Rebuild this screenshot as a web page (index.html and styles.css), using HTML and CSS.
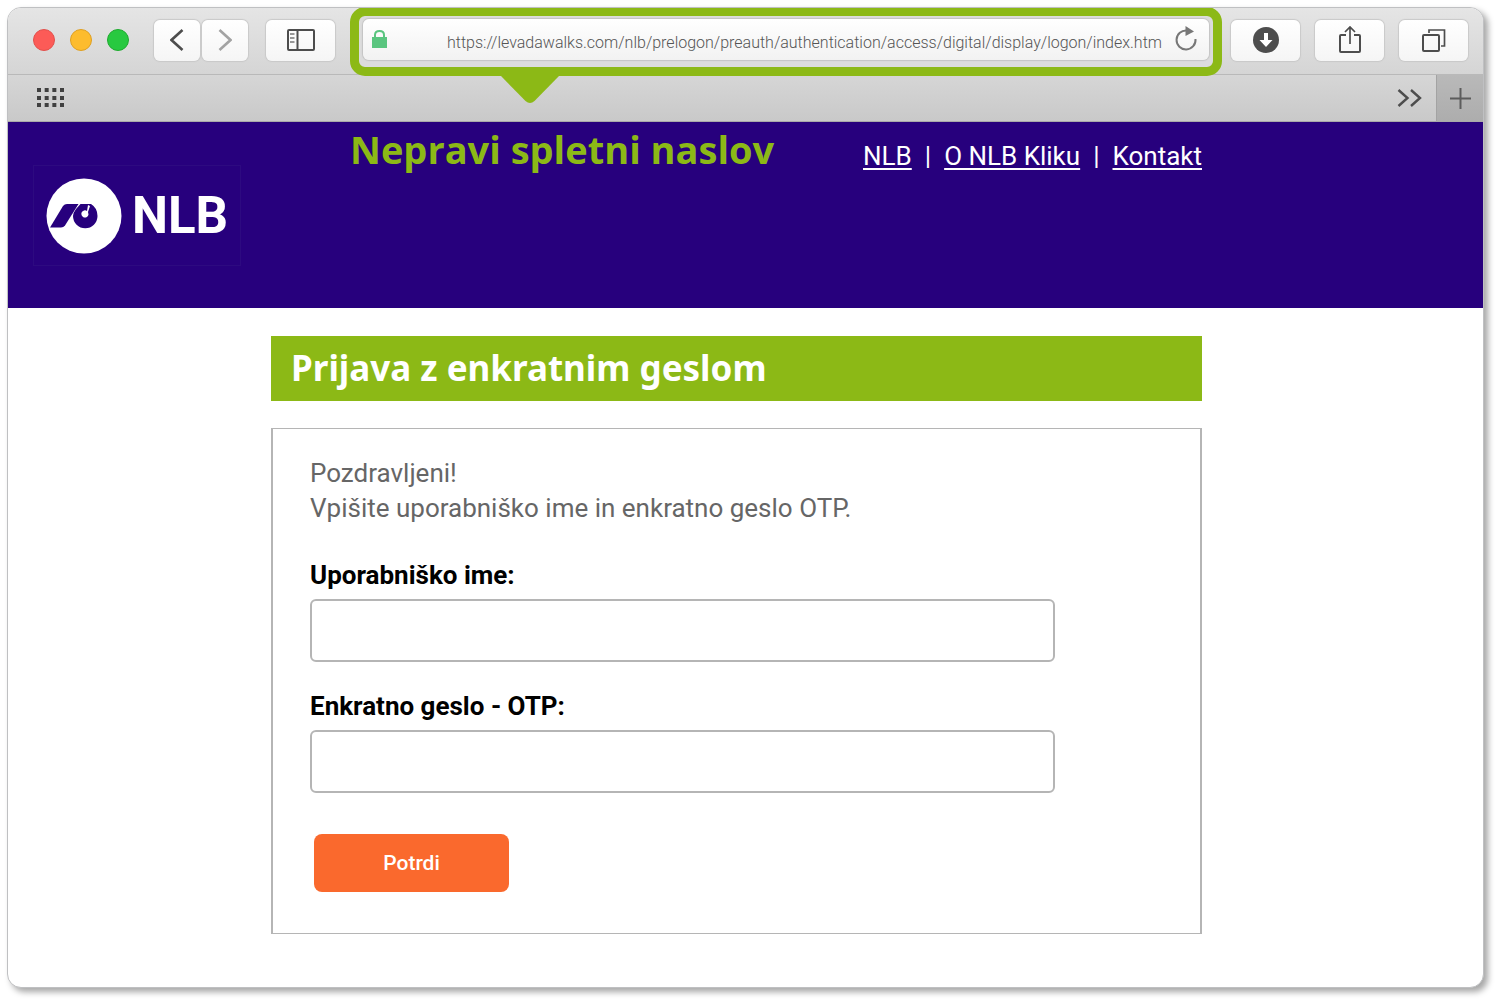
FILE: index.html
```html
<!DOCTYPE html>
<html lang="sl">
<head>
    <meta charset="UTF-8">
    <meta name="viewport" content="width=device-width, initial-scale=1.0">
    <title>Prijava z enkratnim geslom</title>
    <link rel="stylesheet" href="styles.css">
</head>
<body>
    <div class="window">
        <div class="toolbar">
            <div class="lights">
                <span class="light red"></span>
                <span class="light yellow"></span>
                <span class="light green"></span>
            </div>
            <div class="history">
                <button class="tool-button small" type="button" aria-label="Nazaj">
                    <svg width="14" height="24" viewBox="0 0 14 24"><path d="M12.500 2 L1.500 12 L12.500 22" fill="none" stroke="#4d4d4d" stroke-width="2.600"/></svg>
                </button>
                <button class="tool-button small" type="button" aria-label="Naprej">
                    <svg width="14" height="24" viewBox="0 0 14 24"><path d="M1.500 2 L12.500 12 L1.500 22" fill="none" stroke="#a3a3a3" stroke-width="2.600"/></svg>
                </button>
            </div>
            <button class="tool-button" type="button" aria-label="Stranska vrstica">
                <svg width="28" height="22" viewBox="0 0 28 22" fill="none" stroke="#4d4d4d">
                    <rect x="1" y="1" width="26" height="20" rx="1" stroke-width="2"/>
                    <path d="M10.500 1V21" stroke-width="2"/>
                    <path d="M3 5H7.500M3 9H7.500M3 13H7.500" stroke="#777" stroke-width="1.700"/>
                </svg>
            </button>
            <div class="address">
                <div class="address-field">
                    <svg width="15" height="18" viewBox="0 0 15 18"><rect y="7" width="15" height="11" fill="#5ac57f"/><path d="M3 8V5Q3 1 7.500 1Q12 1 12 5V8" fill="none" stroke="#5ac57f" stroke-width="2"/></svg>
                    <input class="address-input" type="text" aria-label="Spletni naslov" value="https://levadawalks.com/nlb/prelogon/preauth/authentication/access/digital/display/logon/index.htm">
                    <button class="reload" type="button" aria-label="Osveži">
                        <svg width="22" height="26" viewBox="0 0 22 26"><path d="M12 4.500A9.500 9.500 0 1 0 20.500 13" fill="none" stroke="#777" stroke-width="2"/><path d="M10.500 0L19 5.500L10.500 10Z" fill="#777"/></svg>
                    </button>
                </div>
                <svg class="pointer" width="58" height="29" viewBox="0 0 58 29"><path d="M0 0H58V1L33.500 26Q29 30 24.500 26L0 1Z" fill="#8cb916"/></svg>
            </div>
            <div class="actions">
                <button class="tool-button" type="button" aria-label="Prenosi">
                    <svg width="26" height="26" viewBox="0 0 26 26"><circle cx="13" cy="13" r="13" fill="#4d4d4d"/><path d="M11 6H15V13H19.500L13 20L6.500 13H11Z" fill="#fff"/></svg>
                </button>
                <button class="tool-button" type="button" aria-label="Deli">
                    <svg width="22" height="30" viewBox="0 0 22 30" fill="none" stroke="#4d4d4d" stroke-width="2"><path d="M7 10H2Q1 10 1 11V26Q1 27 2 27H20Q21 27 21 26V11Q21 10 20 10H15"/><path d="M11 19V2M6 7L11 2L16 7" stroke-width="1.700"/></svg>
                </button>
                <button class="tool-button" type="button" aria-label="Zavihki">
                    <svg width="24" height="23" viewBox="0 0 24 23" fill="none" stroke="#4d4d4d" stroke-width="2"><rect x="1" y="6" width="16" height="16" rx="1"/><path d="M7 4V1H22.500V17H19" stroke-width="1.700"/></svg>
                </button>
            </div>
        </div>

        <div class="bookmarks">
            <button class="plain-button" type="button" aria-label="Zaznamki">
                <svg width="27" height="20" viewBox="0 0 27 20"><path d="M0 2H27M0 10H27M0 17H27" stroke="#404040" stroke-width="4" stroke-dasharray="4 3.670"/></svg>
            </button>
            <button class="plain-button more" type="button" aria-label="Več">
                <svg width="25" height="18" viewBox="0 0 25 18"><path d="M1.500 1L10.500 9L1.500 17M14 1L23 9L14 17" fill="none" stroke="#4d4d4d" stroke-width="2.400"/></svg>
            </button>
            <button class="new-tab" type="button" aria-label="Nov zavihek">
                <svg width="21" height="21" viewBox="0 0 21 21"><path d="M0 10.500H21M10.500 0V21" stroke="#5c5c5c" stroke-width="2"/></svg>
            </button>
        </div>

        <header class="header">
            <div class="logo">
                <svg width="76" height="76" viewBox="0 0 76 76">
                    <circle cx="38" cy="38" r="37.500" fill="#fff"/>
                    <path d="M4 49.500L17 28Q18.500 26 21 26H32.500L19 47.500Q17.500 49.500 15 49.500Z" fill="#27007d"/>
                    <path d="M34.500 26H45Q51.500 30 51.500 38A12 12 0 0 1 27 38Q27 35 30 31Z" fill="#27007d"/>
                    <path d="M42 27L41 33A3.600 3.600 0 1 0 42.500 36.500L42 34L44 28Z" fill="#fff"/>
                </svg>
                <span class="logo-text">NLB</span>
            </div>
            <p class="warning">Nepravi spletni naslov</p>
            <nav class="links">
                <a href="#">NLB</a><span>|</span><a href="#">O NLB Kliku</a><span>|</span><a href="#">Kontakt</a>
            </nav>
        </header>

        <main class="content">
            <h1 class="title">Prijava z enkratnim geslom</h1>
            <form class="login-form">
                <p class="intro">Pozdravljeni!<br>Vpišite uporabniško ime in enkratno geslo OTP.</p>
                <div class="form-group">
                    <label for="username">Uporabniško ime:</label>
                    <input type="text" id="username" name="username">
                </div>
                <div class="form-group">
                    <label for="otp">Enkratno geslo - OTP:</label>
                    <input type="password" id="otp" name="otp">
                </div>
                <button class="submit-btn" type="submit">Potrdi</button>
            </form>
        </main>
    </div>
</body>
</html>
```

FILE: styles.css
```css
* {
    box-sizing: border-box;
}

body {
    margin: 0;
    padding: 7px 16px 12px 7px;
    background: #fff;
    font-family: Roboto, "Liberation Sans", sans-serif;
}

button {
    font-family: inherit;
    border: none;
    padding: 0;
    cursor: pointer;
}

svg {
    display: block;
    flex: none;
}

/* Browser window */
.window {
    border: 1px solid #bfc0c2;
    border-radius: 14px;
    overflow: hidden;
    background: #fff;
    box-shadow: 4px 4px 6px rgba(0, 0, 0, 0.35);
}

.toolbar {
    position: relative;
    z-index: 1;
    display: flex;
    align-items: center;
    height: 67px;
    padding: 0 15px 2px 25px;
    background: linear-gradient(#e5e5e5, #d5d5d5);
    border-bottom: 1px solid #b9b9b9;
}

.lights {
    display: flex;
    gap: 15px;
}

.light {
    width: 22px;
    height: 22px;
    border-radius: 50%;
}

.red {
    background: #fc5b57;
    border: 1px solid #e2504c;
}

.yellow {
    background: #fdbc2e;
    border: 1px solid #dfa023;
}

.green {
    background: #28c940;
    border: 1px solid #1fab2f;
}

.history {
    display: flex;
    gap: 2px;
    margin: 0 18px 0 25px;
}

.tool-button {
    display: flex;
    align-items: center;
    justify-content: center;
    width: 69px;
    height: 41px;
    border-radius: 6px;
    background: linear-gradient(#fff, #f5f5f5);
    box-shadow: 0 0 1px 1px #c9c9c9;
}

.tool-button.small {
    width: 46px;
}

.address {
    position: relative;
    flex: 1;
    height: 69px;
    margin: 2px 9px 0 15px;
    padding: 3px 4px;
    border: 9px solid #8cb916;
    border-radius: 15px;
    background: #dcdcdc;
}

.address-field {
    display: flex;
    align-items: center;
    height: 41px;
    padding: 0 12px 0 9px;
    border-radius: 6px;
    background: linear-gradient(#fff, #f2f2f2);
    box-shadow: 0 0 1px 1px #c4c4c4;
}

.address-input {
    flex: 1;
    min-width: 0;
    margin: 0 13px 0 0;
    padding: 6px 0 0;
    border: none;
    background: none;
    color: #555;
    font-family: Roboto, "Liberation Sans", sans-serif;
    font-size: 16px;
    font-weight: 300;
    text-align: right;
}

.reload {
    background: none;
}

.pointer {
    position: absolute;
    left: 142px;
    top: 59px;
}

.actions {
    display: flex;
    gap: 15px;
}

.bookmarks {
    display: flex;
    align-items: center;
    height: 47px;
    padding-left: 29px;
    background: linear-gradient(#d6d6d6, #c9c9c9);
    border-bottom: 1px solid #a9a9a9;
}

.plain-button {
    background: none;
}

.more {
    margin: 0 14px 0 auto;
}

.new-tab {
    display: flex;
    align-items: center;
    justify-content: center;
    width: 47px;
    height: 46px;
    background: linear-gradient(#b9b9b9, #adadad);
    border-left: 1px solid #a3a3a3;
}

/* Page header */
.header {
    display: flex;
    align-items: flex-start;
    height: 186px;
    padding: 0 281px 0 25px;
    background: #27007d;
    color: #fff;
}

.logo {
    display: flex;
    align-items: center;
    gap: 10px;
    width: 208px;
    height: 101px;
    margin: 43px 109px 0 0;
    padding-left: 12px;
    border: 1px solid #2d0a80;
}

.logo-text {
    font-size: 51px;
    font-weight: 700;
}

.warning {
    margin: 0;
    color: #8cb916;
    font-family: "Open Sans", "Noto Sans", sans-serif;
    font-size: 38px;
    font-weight: 700;
    line-height: 54px;
    white-space: nowrap;
}

.links {
    display: flex;
    gap: 13px;
    margin: 18px 0 0 auto;
    font-size: 26px;
    line-height: 32px;
    white-space: nowrap;
}

.links a {
    color: #fff;
    text-decoration-thickness: 2px;
    text-underline-offset: 3px;
}

/* Login */
.content {
    padding: 28px 281px 53px 263px;
}

.title {
    margin: 0 0 27px;
    padding: 0 20px 2px;
    background: #8cb916;
    color: #fff;
    font-family: "Noto Sans", "Open Sans", sans-serif;
    font-size: 35px;
    font-weight: 700;
    line-height: 63px;
}

.login-form {
    padding: 27px 145px 41px 37px;
    border: solid #b5b5b5;
    border-width: 1px 2px;
}

.intro {
    margin: 0 0 32px;
    color: #666;
    font-size: 26px;
    line-height: 35px;
}

.form-group {
    margin-bottom: 27px;
}

.form-group label {
    display: block;
    margin-bottom: 7px;
    color: #000;
    font-size: 26px;
    font-weight: 700;
    line-height: 34px;
}

.form-group input {
    display: block;
    width: 100%;
    height: 63px;
    padding: 0 16px;
    border: 2px solid #b5b5b5;
    border-radius: 6px;
    background: #fff;
    font-size: 26px;
}

.submit-btn {
    display: block;
    width: 195px;
    height: 58px;
    margin: 41px 0 0 4px;
    border-radius: 8px;
    background: #fa692d;
    color: #fff;
    font-size: 21px;
    font-weight: 500;
}
```
